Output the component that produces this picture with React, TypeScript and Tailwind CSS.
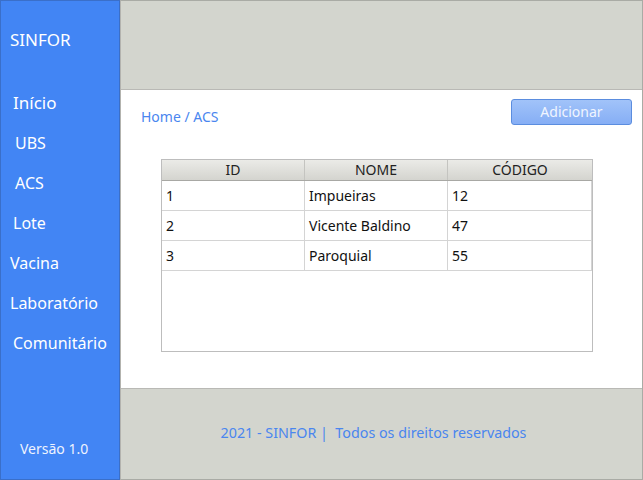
import React from "react";

const rows = [
  { id: "1", nome: "Impueiras", codigo: "12" },
  { id: "2", nome: "Vicente Baldino", codigo: "47" },
  { id: "3", nome: "Paroquial", codigo: "55" },
];

export default function App() {
  return (
    <div
      className="flex h-[480px] w-[643px] overflow-hidden bg-[#d3d5ce]"
      style={{ fontFamily: '"Noto Sans", "Open Sans", sans-serif' }}
    >
      <aside className="flex w-[120px] shrink-0 flex-col border border-[#3a6fc9] bg-[#4285f4] text-white">
        <div className="ml-[9px] mt-[28px] text-[17px] leading-[22px]">SINFOR</div>
        <nav className="mt-[41px] flex flex-col">
          <div className="ml-[12px] h-[40px] text-[17px] leading-[22px]">Início</div>
          <div className="ml-[14px] h-[40px] text-[16px] leading-[22px]">UBS</div>
          <div className="ml-[14px] h-[40px] text-[16px] leading-[22px]">ACS</div>
          <div className="ml-[12px] h-[40px] text-[16px] leading-[22px]">Lote</div>
          <div className="ml-[9px] h-[40px] text-[16px] leading-[22px]">Vacina</div>
          <div className="ml-[9px] h-[40px] text-[16px] leading-[22px]">Laboratório</div>
          <div className="ml-[12px] h-[40px] text-[16px] leading-[22px]">Comunitário</div>
        </nav>
        <div className="mt-auto mb-[21px] ml-[19px] text-[14px] leading-[18px] text-[#eef3fe]">Versão 1.0</div>
      </aside>
      <main className="flex flex-1 flex-col border border-l-[#b3b3ae] border-t-[#a9aba5] border-r-[#a9aba5] border-b-[#a9aba5]">
        <div className="h-[88px] shrink-0" />
        <section className="h-[300px] shrink-0 border-y border-[#b9b9b5] bg-white">
          <div className="flex items-start justify-between pl-[20px] pr-[10px] pt-[9px]">
            <div className="mt-[9px] text-[14px] leading-[18px] text-[#4a86ef]">Home / ACS</div>
            <button className="h-[26px] w-[121px] rounded-[3px] border border-[#5b8ddf] bg-gradient-to-b from-[#a1c3f9] to-[#86aef5] text-[14px] leading-[18px] text-[#f0f5ff]">
              Adicionar
            </button>
          </div>
          <div className="ml-[40px] mt-[33px] h-[193px] w-[432px] border border-[#bdbdbd] bg-white">
            <div className="grid h-[21px] grid-cols-[143px_143px_144px] border-b border-[#a8a8a4] bg-gradient-to-b from-[#ebebe7] to-[#d4d4cf] text-[14px] leading-[20px] text-[#222]">
              <div className="border-r border-[#c4c4c0] text-center">ID</div>
              <div className="border-r border-[#c4c4c0] text-center">NOME</div>
              <div className="text-center">CÓDIGO</div>
            </div>
            {rows.map((r) => (
              <div
                key={r.id}
                className="grid h-[30px] grid-cols-[143px_143px_144px] border-b border-[#d4d4d4] text-[14px] leading-[29px] text-[#111]"
              >
                <div className="border-r border-[#d4d4d4] pl-[4px]">{r.id}</div>
                <div className="border-r border-[#d4d4d4] pl-[4px]">{r.nome}</div>
                <div className="border-r border-[#d4d4d4] pl-[4px]">{r.codigo}</div>
              </div>
            ))}
          </div>
        </section>
        <footer className="flex flex-1 items-center justify-center pb-[2px] pr-[16px] text-[14.3px] leading-[18px] text-[#4a86ef]">
          2021 - SINFOR |&nbsp; Todos os direitos reservados
        </footer>
      </main>
    </div>
  );
}
